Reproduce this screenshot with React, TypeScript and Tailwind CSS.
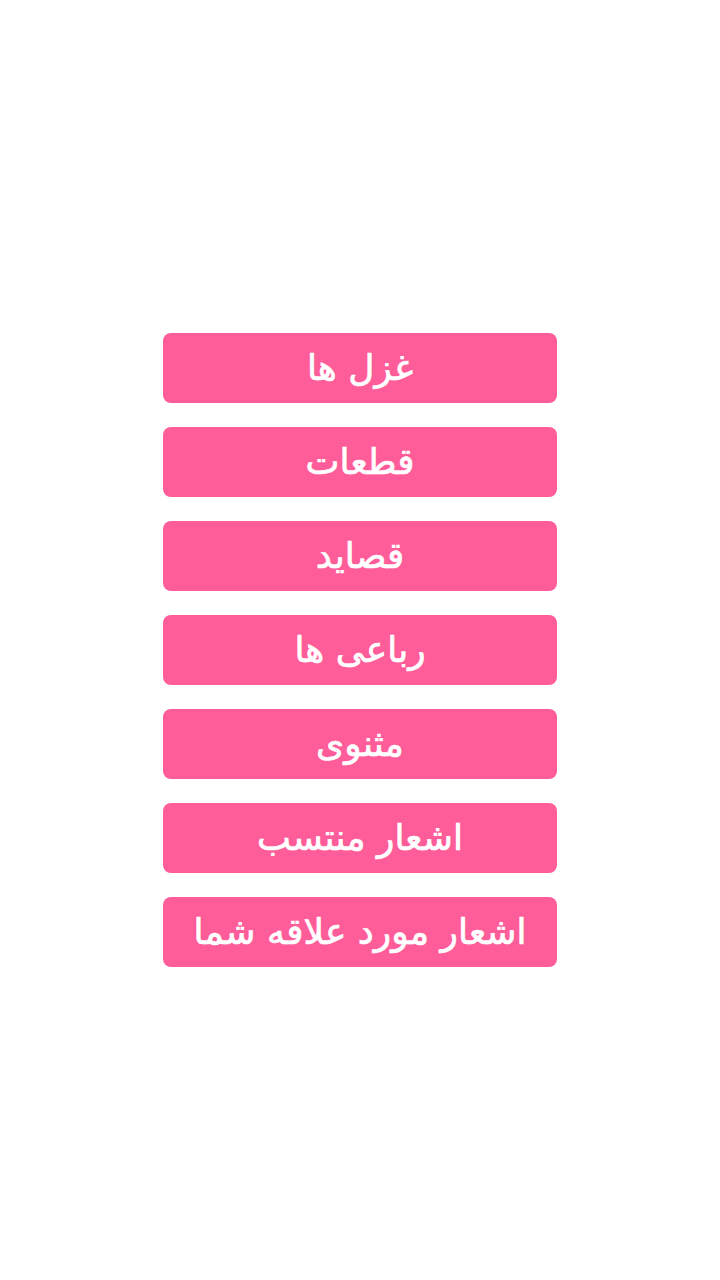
const sections = [
  'غزل ها',
  'قطعات',
  'قصاید',
  'رباعی ها',
  'مثنوی',
  'اشعار منتسب',
  'اشعار مورد علاقه شما',
]

export default function App() {
  return (
    <div className="min-h-[1280px] bg-white pt-[333px]" dir="rtl">
      <div className="flex flex-col items-center gap-6">
        {sections.map((title) => (
          <button
            key={title}
            className="w-[394px] h-[70px] rounded-lg bg-[#ff5c9a] text-white text-[36px] leading-none flex items-center justify-center [-webkit-text-stroke:0.7px_white]"
            style={{ fontFamily: '"DejaVu Sans", sans-serif' }}
          >
            {title}
          </button>
        ))}
      </div>
    </div>
  )
}
